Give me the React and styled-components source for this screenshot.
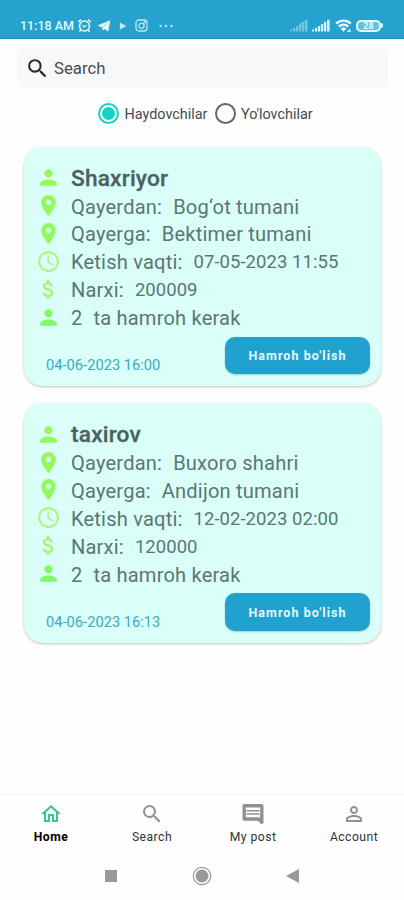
import React, { useState } from 'react'
import styled, { createGlobalStyle } from 'styled-components'
import {
  MdPerson,
  MdLocationOn,
  MdAccessTime,
  MdAttachMoney,
  MdOutlineHome,
  MdSearch,
  MdPersonOutline,
} from 'react-icons/md'

const GlobalStyle = createGlobalStyle`
  * {
    box-sizing: border-box;
  }
  body {
    margin: 0;
    background: #fefefe;
    font-family: Roboto, 'Liberation Sans', sans-serif;
  }
  button {
    font-family: inherit;
    border: 0;
    padding: 0;
    background: none;
  }
`

const Screen = styled.div`
  width: 404px;
  height: 900px;
  display: flex;
  flex-direction: column;
  overflow: hidden;
`

const StatusBar = styled.header`
  height: 39px;
  flex: none;
  display: flex;
  justify-content: space-between;
  align-items: flex-start;
  padding: 17px 21px 0 20px;
  background: #26a2cf;
  border-bottom: 1px solid #1690bd;
  color: #e4f8fc;
`

const StatusGroup = styled.div`
  display: flex;
  align-items: center;
  height: 17px;
  gap: ${({ $gap }) => $gap}px;
  svg {
    display: block;
  }
`

const Time = styled.span`
  width: 56px;
  font-size: 12.5px;
  font-weight: 500;
  white-space: nowrap;
`

const SearchBox = styled.label`
  flex: none;
  display: flex;
  align-items: center;
  height: 40px;
  margin: 9px 16px 0 17px;
  padding-left: 8px;
  border-radius: 7px;
  background: #f7f8fa;
  color: #27292b;
  svg {
    flex: none;
  }
`

const SearchInput = styled.input`
  width: 300px;
  margin-left: 4px;
  padding: 0;
  border: 0;
  outline: 0;
  background: none;
  font: 400 16.8px Roboto, sans-serif;
  color: #404244;
  &::placeholder {
    color: #4a4c4e;
    opacity: 1;
  }
`

const Filters = styled.div`
  flex: none;
  display: flex;
  height: 51px;
  padding-left: 98px;
`

const Filter = styled.button`
  display: flex;
  align-items: center;
  width: ${({ $width }) => $width}px;
  padding-top: 1px;
  font-size: 14.4px;
  color: #47494b;
  white-space: nowrap;
`

const Radio = styled.span`
  display: flex;
  flex: none;
  width: 21px;
  height: 21px;
  margin: -1px 5.5px 0 0;
  padding: 2px;
  border: 2px solid ${({ $on }) => ($on ? '#12d5c3' : '#666')};
  border-radius: 50%;
  &::after {
    content: '';
    flex: 1;
    border-radius: 50%;
    background: ${({ $on }) => ($on ? '#12d5c3' : 'transparent')};
  }
`

const List = styled.main`
  flex: 1;
  display: flex;
  flex-direction: column;
  gap: 17px;
  padding: 7.5px 23px 0 24px;
`

const Card = styled.article`
  height: 239.5px;
  display: flex;
  flex-direction: column;
  justify-content: space-between;
  padding: 17.5px 11px 12px 12px;
  border-radius: 19px;
  background: #d9fff8;
  box-shadow: 0 1px 3px rgba(0, 0, 0, 0.24);
`

const Row = styled.div`
  display: flex;
  align-items: center;
  height: 27.9px;
  color: #5c7672;
  font-size: 20.1px;
  line-height: 24px;
  letter-spacing: 0.18px;
  white-space: pre;
  padding-top: 1.5px;
  svg {
    width: 25px;
    height: 25px;
    flex: none;
    margin: -2px 10px 0 0;
    color: ${({ $tone }) => $tone || '#95f95c'};
  }
`

const Name = styled.h2`
  margin: 0;
  font-size: 22.7px;
  font-weight: 500;
  color: #49625e;
  -webkit-text-stroke: 0.3px;
`

const Value = styled.span`
  margin-left: 11px;
  font-size: ${({ $small }) => ($small ? 18.5 : 20.1)}px;
  letter-spacing: ${({ $small }) => ($small ? 0.05 : 0.18)}px;
`

const CardFooter = styled.footer`
  display: flex;
  justify-content: space-between;
  align-items: flex-end;
`

const Posted = styled.time`
  padding-left: 10px;
  font-size: 14.7px;
  line-height: 18px;
  color: #3da9bf;
`

const JoinBtn = styled.button`
  width: 145px;
  height: 37.5px;
  padding-top: 1px;
  border-radius: 10px;
  background: #21a1cd;
  box-shadow: 0 1px 2px rgba(0, 60, 80, 0.25);
  color: #e6faff;
  font-size: 12.5px;
  font-weight: 700;
  letter-spacing: 1.05px;
`

const TabBar = styled.nav`
  height: 58px;
  flex: none;
  display: flex;
  border-top: 1px solid #f6f6f6;
`

const Tab = styled.button`
  flex: 1;
  display: flex;
  flex-direction: column;
  align-items: center;
  padding: 7px 0 0 1px;
  color: ${({ $on }) => ($on ? '#000' : '#333')};
  font-size: 12.2px;
  font-weight: ${({ $on }) => ($on ? 700 : 400)};
  letter-spacing: 0.45px;
  svg {
    width: 24px;
    height: 24px;
    margin-bottom: 4px;
    color: ${({ $on }) => ($on ? '#35c98b' : '#909090')};
  }
`

const SystemNav = styled.div`
  height: 48px;
  flex: none;
  display: flex;
  align-items: center;
  justify-content: space-between;
  padding: 0 104px 0 104px;
`

const AlarmIcon = () => (
  <svg width="15" height="15" viewBox="0 0 15 15" fill="none" stroke="currentColor" strokeWidth="1.6">
    <circle cx="7.5" cy="8" r="5" />
    <path d="M1.2 4 4 1.6M13.8 4 11 1.6M3.8 12l-1.4 1.8M11.2 12l1.4 1.8" />
    <path d="M5.4 7.3 7.4 9l2.2-1.9" strokeWidth="1.2" />
  </svg>
)

const TelegramIcon = () => (
  <svg width="14" height="12" viewBox="0 0 14 12" fill="currentColor">
    <path d="M.3 5.4 13.3.3 11.2 11.5 7.7 9 6 10.7 5.2 7.4z" />
    <path d="M5.3 7.3 10.6 3" stroke="#26a2cf" strokeWidth=".4" />
  </svg>
)

const PlayIcon = () => (
  <svg width="8" height="8" viewBox="0 0 8 8" fill="currentColor" opacity=".85">
    <path d="M.8.5 7.4 4 .8 7.5z" />
  </svg>
)

const CameraIcon = () => (
  <svg width="13" height="13" viewBox="0 0 13 13" fill="none" stroke="currentColor" strokeWidth="1.3" opacity=".8">
    <rect x="1" y="1" width="11" height="11" rx="3" />
    <circle cx="6.5" cy="6.7" r="2.6" />
    <circle cx="9.6" cy="3.4" r=".4" />
  </svg>
)

const DotsIcon = () => (
  <svg width="17" height="4" viewBox="-3 0 17 4" fill="currentColor" opacity=".75">
    <circle cx="1.6" cy="2" r="1.3" />
    <circle cx="7" cy="2" r="1.3" />
    <circle cx="12.4" cy="2" r="1.3" />
  </svg>
)

const SignalIcon = ({ off }) => (
  <svg width="18" height="13" viewBox="0 0 18 13" fill="currentColor" opacity={off ? 0.4 : 0.95}>
    <rect x="0" y="10.5" width="2" height="2" />
    <rect x="3" y="8.8" width="2.2" height="3.7" />
    <rect x="6" y="7" width="2.2" height="5.5" />
    <rect x="9" y="5" width="2.2" height="7.5" />
    <rect x="12" y="2.8" width="2.2" height="9.7" />
    <rect x="15" y=".8" width="2.6" height="11.7" />
    {off && <path d="m10 3 5 5m0-5-5 5" stroke="currentColor" />}
  </svg>
)

const WifiIcon = () => (
  <svg width="17" height="14" viewBox="0 0 17 14" fill="none" stroke="currentColor" strokeWidth="2.3">
    <path d="M1.2 4.6a10.5 10.5 0 0 1 14.6 0M3.8 7.6a6.8 6.8 0 0 1 9.4 0" />
    <path d="M5.7 9.7a4 4 0 0 1 5.6 0L8.5 12.8z" fill="currentColor" stroke="none" />
    <path d="M12 12.2h4M14.5 9.8v3" strokeWidth="1.2" />
  </svg>
)

const PostIcon = () => (
  <svg viewBox="0 0 24 24" fill="none" stroke="currentColor">
    <path d="M3.2 3.8h17.6v16.4L17.6 17H3.2z" strokeWidth="3.4" strokeLinejoin="round" />
    <path d="M5.5 8.8h13M5.5 12h13" strokeWidth="1.4" />
  </svg>
)

const Battery = styled.span`
  display: flex;
  align-items: center;
  &::after {
    content: '';
    width: 2px;
    height: 5px;
    background: currentColor;
    border-radius: 0 2px 2px 0;
  }
`

const BatteryLevel = styled.span`
  display: flex;
  align-items: center;
  justify-content: center;
  width: 25px;
  height: 12px;
  border: 2px solid currentColor;
  border-radius: 5px;
  background: rgba(255, 255, 255, 0.3);
  font-size: 9px;
  font-weight: 700;
`

const rides = [
  {
    name: 'Shaxriyor',
    from: 'Bog‘ot tumani',
    to: 'Bektimer tumani',
    leaves: '07-05-2023 11:55',
    price: '200009',
    seats: 2,
    posted: '04-06-2023 16:00',
  },
  {
    name: 'taxirov',
    from: 'Buxoro shahri',
    to: 'Andijon tumani',
    leaves: '12-02-2023 02:00',
    price: '120000',
    seats: 2,
    posted: '04-06-2023 16:13',
  },
]

const tabs = [
  { label: 'Home', Icon: MdOutlineHome },
  { label: 'Search', Icon: MdSearch },
  { label: 'My post', Icon: PostIcon },
  { label: 'Account', Icon: MdPersonOutline },
]

const RideCard = ({ ride }) => (
  <Card>
    <div>
      <Row>
        <MdPerson />
        <Name>{ride.name}</Name>
      </Row>
      <Row>
        <MdLocationOn />
        Qayerdan:<Value>{ride.from}</Value>
      </Row>
      <Row>
        <MdLocationOn />
        Qayerga:<Value>{ride.to}</Value>
      </Row>
      <Row $tone="#aff483">
        <MdAccessTime />
        Ketish vaqti:<Value $small>{ride.leaves}</Value>
      </Row>
      <Row $tone="#a4f56f">
        <MdAttachMoney />
        Narxi:<Value $small>{ride.price}</Value>
      </Row>
      <Row $tone="#80fb68">
        <MdPerson />
        {ride.seats}
        <Value>ta hamroh kerak</Value>
      </Row>
    </div>
    <CardFooter>
      <Posted>{ride.posted}</Posted>
      <JoinBtn>Hamroh bo'lish</JoinBtn>
    </CardFooter>
  </Card>
)

const App = () => {
  const [role, setRole] = useState('drivers')
  const [tab, setTab] = useState('Home')

  return (
    <Screen>
      <GlobalStyle />
      <StatusBar>
        <StatusGroup $gap={8}>
          <StatusGroup $gap={5}>
            <StatusGroup $gap={1}>
              <Time>11:18 AM</Time>
              <AlarmIcon />
            </StatusGroup>
            <TelegramIcon />
          </StatusGroup>
          <PlayIcon />
          <CameraIcon />
          <DotsIcon />
        </StatusGroup>
        <StatusGroup $gap={4.5}>
          <SignalIcon off />
          <SignalIcon />
          <WifiIcon />
          <Battery>
            <BatteryLevel>28</BatteryLevel>
          </Battery>
        </StatusGroup>
      </StatusBar>
      <SearchBox>
        <MdSearch size={25} />
        <SearchInput placeholder="Search" />
      </SearchBox>
      <Filters>
        <Filter $width={116.5} onClick={() => setRole('drivers')}>
          <Radio $on={role === 'drivers'} />
          Haydovchilar
        </Filter>
        <Filter $width={100} onClick={() => setRole('riders')}>
          <Radio $on={role === 'riders'} />
          Yo'lovchilar
        </Filter>
      </Filters>
      <List>
        {rides.map(ride => (
          <RideCard key={ride.name} ride={ride} />
        ))}
      </List>
      <TabBar>
        {tabs.map(({ label, Icon }) => (
          <Tab key={label} $on={tab === label} onClick={() => setTab(label)}>
            <Icon />
            {label}
          </Tab>
        ))}
      </TabBar>
      <SystemNav>
        <svg width="14" height="14" viewBox="0 0 14 14">
          <rect x="1" y="1" width="12" height="12" fill="#999" />
        </svg>
        <svg width="20" height="20" viewBox="0 0 20 20">
          <circle cx="10" cy="10" r="8.7" fill="none" stroke="#999" strokeWidth="1.2" />
          <circle cx="10" cy="10" r="6.4" fill="#999" />
        </svg>
        <svg width="14" height="14" viewBox="0 0 14 14">
          <path d="M13 0v14L0 7z" fill="#999" />
        </svg>
      </SystemNav>
    </Screen>
  )
}

export default App
